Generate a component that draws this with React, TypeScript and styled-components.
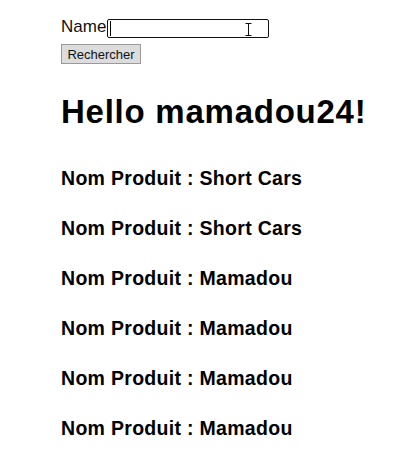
import React from "react";
import styled, { createGlobalStyle } from "styled-components";

const Global = createGlobalStyle`
  html, body { margin: 0; padding: 0; background: #ffffff; }
  body { font-family: "Liberation Sans", Arial, sans-serif; color: #000; }
`;

const Page = styled.div`
  padding: 17px 0 0 61px;
`;

const SearchForm = styled.form`
  display: flex;
  flex-direction: column;
  align-items: flex-start;
  gap: 6px;
  margin: 0;
`;

const Field = styled.label`
  display: flex;
  align-items: flex-start;
  font-size: 17px;
  line-height: 20px;
  position: relative;
  color: #111;
`;

const TextInput = styled.input`
  box-sizing: border-box;
  width: 162px;
  height: 19px;
  margin: 2px 0 0 1px;
  border: 1.5px solid #111;
  border-radius: 2px;
  padding: 0 2px;
  font: 13px "Liberation Sans", Arial, sans-serif;
  background: #fff;
  outline: none;
`;

const Caret = styled.span`
  position: absolute;
  left: 49px;
  top: 4px;
  width: 1px;
  height: 15px;
  background: #000;
`;

const Cursor = styled.svg`
  position: absolute;
  left: 184px;
  top: 6px;
`;

const SubmitButton = styled.button`
  box-sizing: border-box;
  width: 80px;
  height: 20px;
  padding: 0;
  background: #dcdcdc;
  border: 1px solid #9a9a9a;
  font: 13px "Liberation Sans", Arial, sans-serif;
  color: #111;
`;

const Greeting = styled.h1`
  font-size: 33px;
  letter-spacing: 0.75px;
  font-weight: bold;
  margin: 30px 0 0;
  line-height: 36px;
`;

const ProductList = styled.div`
  display: flex;
  flex-direction: column;
  gap: 28px;
  margin-top: 37px;
`;

const ProductName = styled.h3`
  font-size: 19.5px;
  letter-spacing: 0.3px;
  font-weight: bold;
  line-height: 22px;
  margin: 0;
`;

const products = ["Short Cars", "Short Cars", "Mamadou", "Mamadou", "Mamadou", "Mamadou"];

export default function App() {
  return (
    <>
      <Global />
      <Page>
        <SearchForm onSubmit={(e) => e.preventDefault()}>
          <Field>
            Name
            <TextInput type="text" />
            <Caret />
            <Cursor width="7" height="13" viewBox="0 0 7 13">
              <path d="M0.5 0.5h6M3.5 0.5v12M0.5 12.5h6" stroke="#111" strokeWidth="1" fill="none" />
            </Cursor>
          </Field>
          <SubmitButton type="submit">Rechercher</SubmitButton>
        </SearchForm>
        <Greeting>Hello mamadou24!</Greeting>
        <ProductList>
          {products.map((p, i) => (
            <ProductName key={i}>Nom Produit : {p}</ProductName>
          ))}
        </ProductList>
      </Page>
    </>
  );
}
